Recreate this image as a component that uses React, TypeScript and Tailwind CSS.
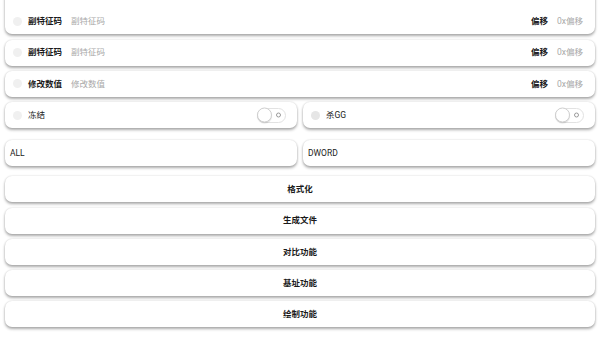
import React from "react";

const shadow =
  "shadow-[0_2px_3px_rgba(0,0,0,0.32),0_0_2px_rgba(0,0,0,0.16)]";
const card = `h-[26px] rounded-[7px] bg-white ${shadow} flex items-center`;

function Dot({ dark }: { dark?: boolean }) {
  return (
    <div
      className={`ml-[8px] w-[9px] h-[9px] rounded-full ${dark ? "bg-[#e6e6e6]" : "bg-[#f0f0f0]"}`}
    />
  );
}

function InputContent({ label }: { label: string }) {
  return (
    <>
      <Dot />
      <span className="ml-[6px] font-bold text-[#1a1a1a]">{label}</span>
      <span className="ml-[9px] text-[#a8a8a8]">{label}</span>
      <div className="flex-1" />
      <span className="font-bold text-[#1a1a1a]">偏移</span>
      <span className="ml-[9px] mr-[12px] text-[#a8a8a8]">0x偏移</span>
    </>
  );
}

function InputRow({ label }: { label: string }) {
  return (
    <div className={card}>
      <InputContent label={label} />
    </div>
  );
}

function Toggle() {
  return (
    <div className="relative w-[29px] h-[15px] rounded-full border border-[#e2e2e2] bg-white mr-[11px]">
      <div className="absolute left-[-1px] top-1/2 -translate-y-1/2 w-[15px] h-[15px] rounded-full bg-white border border-[#cfcfcf] shadow-[0_1px_1px_rgba(0,0,0,0.12)]" />
      <div className="absolute right-[4px] top-1/2 -translate-y-1/2 w-[5px] h-[5px] rounded-full border border-[#9a9a9a]" />
    </div>
  );
}

function SwitchCard({ label, dark }: { label: string; dark?: boolean }) {
  return (
    <div className={card}>
      <Dot dark={dark} />
      <span className="ml-[6px] text-[#1a1a1a]">{label}</span>
      <div className="flex-1" />
      <Toggle />
    </div>
  );
}

function Button({ label, mt }: { label: string; mt: string }) {
  return (
    <div className={`${card} ${mt} justify-center`}>
      <span className="font-bold text-[#1a1a1a]">{label}</span>
    </div>
  );
}

export default function App() {
  return (
    <div
      className="w-[600px] h-[338px] overflow-hidden bg-white px-[5px] flex flex-col text-[8.5px] leading-none"
      style={{ fontFamily: 'Roboto, "Noto Sans CJK SC", sans-serif' }}
    >
      <div className={`mt-[-10px] h-[44px] rounded-[7px] bg-white ${shadow} flex items-end`}>
        <div className="h-[26px] w-full flex items-center">
          <InputContent label="副特征码" />
        </div>
      </div>
      <div className="mt-[5.5px]">
        <InputRow label="副特征码" />
      </div>
      <div className="mt-[5.25px]">
        <InputRow label="修改数值" />
      </div>
      <div className="mt-[5.25px] grid grid-cols-2 gap-[6px]">
        <SwitchCard label="冻结" />
        <SwitchCard label="杀GG" dark />
      </div>
      <div className="mt-[11.75px] grid grid-cols-2 gap-[6px]">
        <div className={card}>
          <span className="ml-[5px] text-[#1a1a1a]">ALL</span>
        </div>
        <div className={card}>
          <span className="ml-[5px] text-[#1a1a1a]">DWORD</span>
        </div>
      </div>
      <Button label="格式化" mt="mt-[10.5px]" />
      <Button label="生成文件" mt="mt-[5.25px]" />
      <Button label="对比功能" mt="mt-[5.25px]" />
      <Button label="基址功能" mt="mt-[5.25px]" />
      <Button label="绘制功能" mt="mt-[5.25px]" />
    </div>
  );
}
